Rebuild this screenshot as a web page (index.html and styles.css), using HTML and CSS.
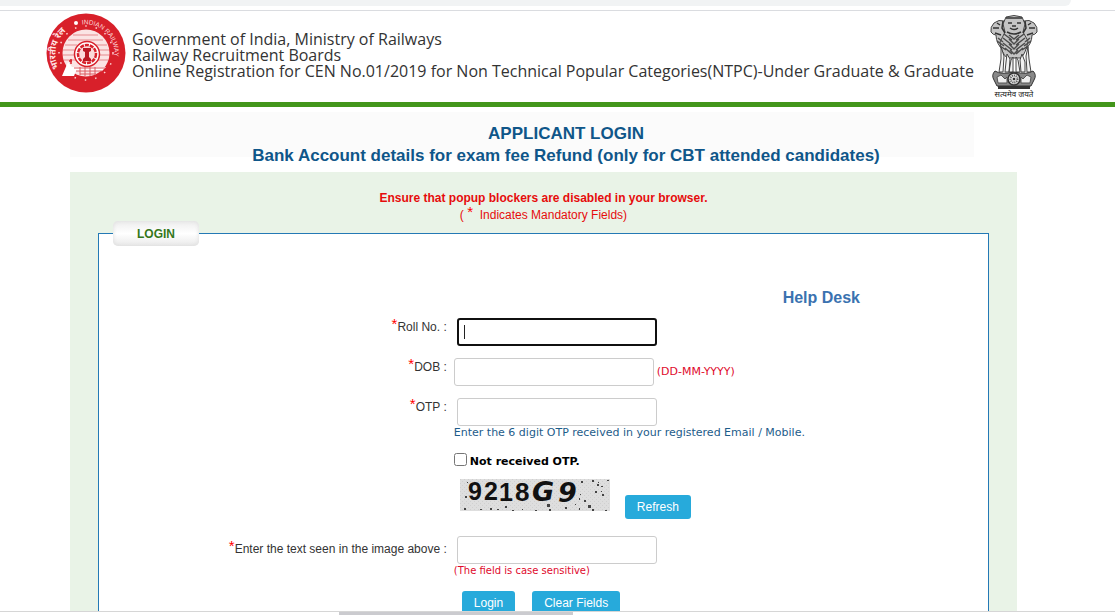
FILE: index.html
```html
<!DOCTYPE html>
<html lang="en">
<head>
    <meta charset="UTF-8">
    <meta name="viewport" content="width=device-width, initial-scale=1.0">
    <title>RRB - Applicant Login</title>
    <link rel="stylesheet" href="styles.css">
</head>
<body>
    <div class="top-strip"></div>

    <div class="page">
        <header class="site-header">
            <svg class="logo" viewBox="0 0 80 80" role="img" aria-label="Indian Railways">
                <defs>
                    <path id="arc-right" d="M36 11.500A29 29 0 0 1 68 45" />
                    <path id="arc-left" d="M13 55A30 30 0 0 1 31 12" />
                </defs>
                <circle cx="40" cy="40" r="39.500" fill="#d8202a" />
                <text font-size="6.500" fill="#ffd9d9"><textPath href="#arc-right">INDIAN RAILWAY</textPath></text>
                <text class="hindi" font-size="9" font-weight="bold" fill="#ffe3e3"><textPath href="#arc-left">भारतीय रेल</textPath></text>
                <circle cx="30" cy="10" r="2" fill="#fff" />
                <circle cx="40" cy="40" r="27" fill="none" stroke="#ffd0d0" stroke-width="1.500" stroke-dasharray="1.500 9" />
                <circle cx="40" cy="40" r="23.500" fill="#fbe4e4" />
                <path d="M27 22h25M22 27h35M19 32h12M49 32h12M17 37h11M52 37h11M17 42h11M52 42h11M18 47h12M50 47h12" stroke="#e58a8e" stroke-width="1" />
                <path d="M16 63L22 49L26 54H60L56 58H30L28 63Z" fill="#fff" />
                <path d="M28 55h31M30 58h26M34 61h16M34 54v8M39 54v9M44 54v9M49 54v8" stroke="#dc5a60" stroke-width="1" />
                <circle cx="41" cy="41" r="12.500" fill="#fff" stroke="#d8202a" stroke-width="1.500" />
                <circle cx="41" cy="41" r="9" fill="#fbdada" stroke="#d8202a" stroke-width="2.500" stroke-dasharray="4 1" />
                <path d="M37 35h8v3l-2 1v5l2 2v2h-8v-2l2-2v-5l-2-1z" fill="#b91822" />
                <path d="M23 48h3M25 46v5" stroke="#d8202a" stroke-width="1.500" />
            </svg>
            <div class="site-title">
                Government of India, Ministry of Railways<br>
                Railway Recruitment Boards<br>
                Online Registration for CEN No.01/2019 for Non Technical Popular Categories(NTPC)-Under Graduate &amp; Graduate
            </div>
            <svg class="emblem" viewBox="0 0 48 84" role="img" aria-label="State Emblem of India">
                <g fill="#c4c4c4" stroke="#444" stroke-width="1">
                    <path d="M14 6Q9 4 4 8Q0 12 1 17Q3 20 6 20Q6 29 14 36L18 24Z" />
                    <path d="M34 6Q39 4 44 8Q48 12 47 17Q45 20 42 20Q42 29 34 36L30 24Z" />
                    <path d="M16 2Q24 -1 32 2L35 9L33 17L38 26Q36 38 31 43H17Q11 37 10 27L15 17L13 9Z" />
                </g>
                <path d="M11 32L14 41L13 57H9L11 44ZM17 39L20 44L19 57H15L16 47ZM23 42V57H19L21 45ZM26 42V57H30L28 45ZM32 39L30 45L31 57H35L35 47ZM38 32L36 41L37 57H41L39 44Z" fill="#f2f2f2" stroke="#444" />
                <path d="M16 3h16M18 8h4M27 8h4M20 13q4 3 8 0M22 11h4M17 17q7 4 14 0M3 13h6M39 13h6M5 18l6 2M43 18l-6 2M13 6l-1 7l3 5M35 6l1 7l-3 5M7 8l3 2M41 8l-3 2" fill="none" stroke="#333" stroke-width="1.500" />
                <path d="M8 23l5 4M7 26l7 5M10 31l6 4M40 23l-5 4M41 26l-7 5M38 31l-6 4M14 19l8 6M34 19l-8 6M13 23l9 7M35 23l-9 7M13 28l9 7M35 28l-9 7M15 33l7 6M33 33l-7 6M19 20l5 4l5-4M19 24l5 5l5-5M19 29l5 5l5-5M20 35l4 4l4-4" fill="none" stroke="#4c4c4c" stroke-width="1.500" />
                <path d="M5 56Q1 60 4 65L7 71H41L44 65Q47 60 43 56Q37 60 24 57Q11 60 5 56Z" fill="#888" stroke="#333" />
                <path d="M7 62l4-2l4 4l2-2v6H8zM41 62l-4-2l-4 4l-2-2v6h9z" fill="#eee" stroke="#555" />
                <circle cx="24" cy="64" r="6" fill="#ddd" stroke="#333" stroke-width="1.500" />
                <circle cx="24" cy="64" r="3.500" fill="none" stroke="#555" stroke-width="2" stroke-dasharray="1 1" />
                <circle cx="24" cy="64" r="1.300" fill="#333" />
                <rect x="8" y="71" width="32" height="3" fill="#333" />
                <text class="hindi" x="24" y="82" font-size="8" text-anchor="middle" fill="#222">सत्यमेव जयते</text>
            </svg>
        </header>

        <main class="content">
            <h1 class="page-heading">APPLICANT LOGIN<br>Bank Account details for exam fee Refund (only for CBT attended candidates)</h1>

            <div class="panel">
                <p class="notice"><strong>Ensure that popup blockers are disabled in your browser.</strong><br>
                ( <span class="req">*</span>&nbsp; Indicates Mandatory Fields)</p>

                <form>
                    <fieldset class="login-box">
                        <legend>LOGIN</legend>
                        <div class="help"><a href="#">Help Desk</a></div>

                        <div class="row">
                            <label for="roll"><span class="req">*</span>Roll No. :</label>
                            <div class="field"><input class="text-box indent" type="text" id="roll" autofocus></div>
                        </div>
                        <div class="row">
                            <label for="dob"><span class="req">*</span>DOB :</label>
                            <div class="field inline">
                                <input class="text-box" type="text" id="dob">
                                <span class="hint red">(DD-MM-YYYY)</span>
                            </div>
                        </div>
                        <div class="row">
                            <label for="otp"><span class="req">*</span>OTP :</label>
                            <div class="field">
                                <input class="text-box indent" type="text" id="otp">
                                <div class="hint">Enter the 6 digit OTP received in your registered Email / Mobile.</div>
                                <div class="check">
                                    <input type="checkbox" id="no-otp">
                                    <label for="no-otp">Not received OTP.</label>
                                </div>
                                <div class="captcha">
                                    <svg width="150" height="32" viewBox="0 0 150 32" role="img" aria-label="Captcha">
                                        <defs>
                                            <pattern id="grain" width="4" height="4" patternUnits="userSpaceOnUse">
                                                <path d="M0 0h1v1H0zM2 2h1v1H2z" fill="#d0d0d0" />
                                            </pattern>
                                        </defs>
                                        <rect width="150" height="32" fill="#dedede" />
                                        <rect width="150" height="32" fill="url(#grain)" />
                                        <g class="captcha-text">
                                            <text x="8" y="21" font-size="25">9</text>
                                            <text x="24" y="21" font-size="25">2</text>
                                            <text x="39" y="22" font-size="25">1</text>
                                            <text x="55" y="22" font-size="26">8</text>
                                            <text class="wide" x="72" y="22" font-size="27">G</text>
                                            <text class="wide" x="98" y="23" font-size="27">9</text>
                                        </g>
                                        <path d="M5 17h2v2H5zM4 29h2v2H4zM7 3h1v1H7zM20 30h2v1h-2zM30 29h2v2h-2zM37 30h2v1h-2zM45 27h2v2h-2zM52 31h2v1h-2zM62 30h1v1h-1zM75 31h2v1h-2zM87 25h3v3h-3zM89 30h2v2h-2zM105 28h2v2h-2zM115 25h1v1h-1zM121 2h2v2h-2zM120 15h1v1h-1zM124 21h2v2h-2zM128 26h3v3h-3zM132 30h2v2h-2zM132 1h2v2h-2zM135 12h2v2h-2zM137 5h2v2h-2zM141 7h2v1h-2zM142 15h2v2h-2zM147 1h2v1h-2zM145 31h2v1h-2zM119 19h1v2h-1zM138 3h1v1h-1zM141 12h1v1h-1zM119 29h1v2h-1z" fill="#444" />
                                    </svg>
                                    <button class="btn" type="button">Refresh</button>
                                </div>
                            </div>
                        </div>
                        <div class="row captcha-row">
                            <label for="captcha-text"><span class="req">*</span>Enter the text seen in the image above :</label>
                            <div class="field">
                                <input class="text-box indent" type="text" id="captcha-text">
                                <div class="hint small red">(The field is case sensitive)</div>
                                <div class="actions">
                                    <button class="btn" type="submit">Login</button>
                                    <button class="btn" type="reset">Clear Fields</button>
                                </div>
                            </div>
                        </div>
                    </fieldset>
                </form>
            </div>
        </main>
    </div>

    <div class="scroll-track"><div class="scroll-thumb"></div></div>
</body>
</html>
```
FILE: styles.css
```css
* {
    box-sizing: border-box;
}

body {
    margin: 0;
    height: 100vh;
    display: flex;
    flex-direction: column;
    overflow: hidden;
    font-family: "Liberation Sans", Arial, sans-serif;
    font-size: 12px;
    color: #333;
    background: #fff;
}

/* bottom edge of the browser toolbar */
.top-strip {
    flex: none;
    height: 11px;
    border-bottom: 1px solid #dadce0;
}

.top-strip::before {
    content: "";
    display: block;
    height: 6px;
    margin-right: 44px;
    background: #f1f3f4;
    border-radius: 0 0 6px 0;
}

.page {
    flex: 1;
    min-height: 0;
    overflow: hidden;
}

/* header */
.site-header {
    display: flex;
    align-items: flex-start;
    height: 96px;
    padding: 2px 77px 0 46px;
    border-bottom: 5px solid #43961b;
}

.logo {
    flex: none;
    width: 80px;
    height: 80px;
}

.site-title {
    flex: 1;
    padding: 18px 0 0 6px;
    font-family: "Open Sans", Tahoma, sans-serif;
    font-size: 16px;
    line-height: 16px;
    white-space: nowrap;
}

.emblem {
    flex: none;
    width: 48px;
    height: 84px;
    margin-top: 2px;
}

.hindi {
    font-family: "Noto Sans", sans-serif;
}

/* content */
.content {
    margin: 5px 98px 0 70px;
}

.page-heading {
    height: 60px;
    margin: 0;
    padding: 11px 0 0 45px;
    font-size: 17px;
    line-height: 22px;
    text-align: center;
    color: #0f5689;
    background: linear-gradient(#fbfbfb, #fbfbfb) no-repeat 0 0 / calc(100% - 43px) 45px;
}

.panel {
    padding: 18px 28px 28px;
    background: #e9f3e7;
}

.notice {
    margin: 0 0 -3px;
    line-height: 17px;
    text-align: center;
    color: #e60c0c;
}

.req {
    font-size: 15px;
    line-height: 10px;
    vertical-align: 2px;
    color: #f00;
}

.login-box {
    min-width: 0;
    margin: 0;
    padding: 0 0 28px;
    border: 1px solid #2479b5;
    background: #fff;
}

.login-box legend {
    margin-left: 14px;
    padding: 1px 24px 0;
    font-weight: bold;
    line-height: 24px;
    color: #35771c;
    background: linear-gradient(#ededed, #fff 50%, #e9e9e9);
    box-shadow: inset 0 0 4px #ddd;
    border-radius: 5px;
}

.help {
    padding: 42px 128px 11px 0;
    font-size: 16px;
    font-weight: bold;
    line-height: 19px;
    text-align: right;
}

.help a {
    color: #3a72b0;
    text-decoration: none;
}

.row {
    display: grid;
    grid-template-columns: 40% 60%;
    margin-bottom: 12px;
    padding-right: 2px;
}

.row > label {
    padding-right: 7px;
    line-height: 18px;
    text-align: right;
}

.captcha-row > label {
    padding-top: 4px;
}

.text-box {
    display: block;
    width: 200px;
    height: 28px;
    padding: 4px 6px;
    font-size: 14px;
    border: 1px solid #ccc;
    border-radius: 3px;
}

.text-box:focus {
    border: 2px solid #101010;
    outline: none;
}

#roll:focus {
    caret-color: transparent;
    background: linear-gradient(#222, #222) no-repeat 5px center / 1px 14px;
}

.indent {
    margin-left: 3px;
}

.inline {
    display: flex;
    align-items: center;
    gap: 3px;
}

.hint {
    font-family: "DejaVu Sans", Verdana, sans-serif;
    font-size: 11px;
    line-height: 14px;
    color: #1d5c8a;
}

.hint.small {
    font-size: 10px;
}

.hint.red {
    color: #e0092c;
}

.check {
    display: flex;
    align-items: flex-start;
    gap: 3px;
    margin-top: 12px;
}

.check input {
    width: 13px;
    height: 13px;
    margin: 1px 0 0;
}

.check label {
    font-family: "DejaVu Sans", Verdana, sans-serif;
    font-size: 11px;
    font-weight: bold;
    line-height: 20px;
    color: #000;
}

.captcha {
    display: flex;
    align-items: flex-end;
    gap: 15px;
    padding: 7px 0 5px 6px;
}

.captcha svg {
    margin-bottom: 8px;
}

.captcha-text {
    font-family: "Liberation Sans", Arial, sans-serif;
    font-weight: bold;
    fill: #111;
}

.captcha-text .wide {
    font-family: "DejaVu Sans", Verdana, sans-serif;
    font-style: italic;
}

.btn {
    height: 24px;
    padding: 0 12px;
    font-family: inherit;
    font-size: 12px;
    color: #fff;
    background: #27aadb;
    border: 0;
    border-radius: 3px;
}

.actions {
    display: flex;
    gap: 17px;
    padding: 13px 0 0 8px;
}

/* horizontal scroll bar along the window's bottom edge */
.scroll-track {
    flex: none;
    height: 4px;
    border-top: 1px solid #d6d6d6;
    background: #fff;
}

.scroll-thumb {
    width: 21%;
    height: 3px;
    margin-left: 30.4%;
    background: #cbcbcf;
}
```
